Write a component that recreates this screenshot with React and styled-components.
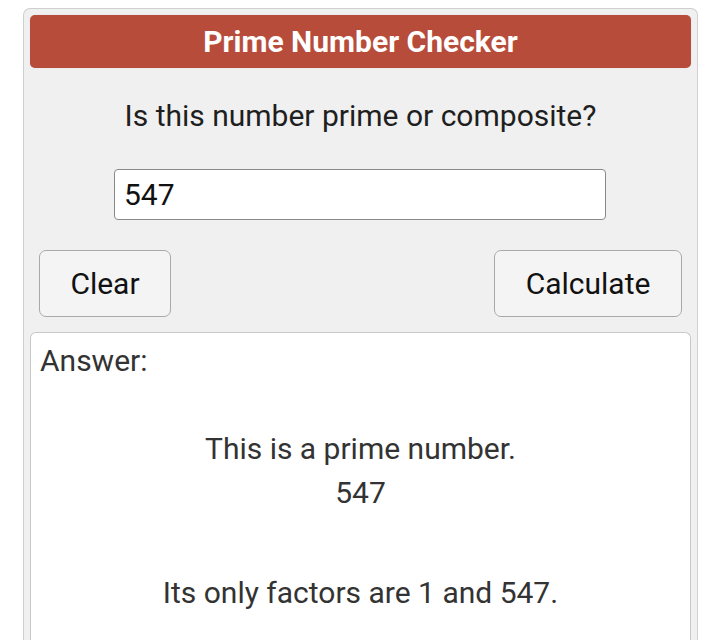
import React from "react";
import styled, { createGlobalStyle } from "styled-components";

const Global = createGlobalStyle`
  html, body { margin: 0; padding: 0; background: #ffffff; }
  body { font-family: Roboto, "Noto Sans", Arial, sans-serif; }
`;

const Page = styled.div`
  padding: 8px 22px 0 23px;
`;

const Panel = styled.div`
  width: 675px;
  box-sizing: border-box;
  background: #f0f0f0;
  border: 1px solid #cfcfcf;
  border-bottom: none;
  border-radius: 7px 7px 0 0;
  padding: 6px 6px 0 6px;
  height: 632px;
  overflow: hidden;
`;

const Header = styled.div`
  height: 53px;
  background: #b84c3a;
  border-radius: 5px;
  color: #ffffff;
  font-weight: 700;
  font-size: 30px;
  display: flex;
  align-items: center;
  justify-content: center;
  box-shadow: 0 0 1px rgba(0,0,0,0.2);
`;

const Question = styled.div`
  margin-top: 32px;
  text-align: center;
  font-size: 30px;
  color: #1f1f1f;
  line-height: 32px;
`;

const InputRow = styled.div`
  display: flex;
  justify-content: center;
  margin-top: 37px;
`;

const NumberInput = styled.input`
  width: 492px;
  height: 51px;
  box-sizing: border-box;
  border: 1px solid #8a8a8a;
  border-radius: 4px;
  background: #ffffff;
  font-family: Roboto, sans-serif;
  font-size: 30px;
  color: #111;
  padding: 0 9px;
  margin-left: -1px;
  outline: none;
`;

const ButtonRow = styled.div`
  display: flex;
  justify-content: space-between;
  margin-top: 30px;
  padding: 0 9px;
`;

const Button = styled.button`
  width: ${(p) => p.w}px;
  height: 67px;
  box-sizing: border-box;
  background: #f4f4f4;
  border: 1px solid #a9a9a9;
  border-radius: 7px;
  font-family: Roboto, sans-serif;
  font-size: 30px;
  color: #111;
  cursor: pointer;
`;

const AnswerBox = styled.div`
  margin-top: 15px;
  background: #ffffff;
  border: 1px solid #c8c8c8;
  border-bottom: none;
  border-radius: 6px 6px 0 0;
  height: 320px;
  padding: 12px 9px 0 9px;
  color: #333333;
  font-size: 30px;
`;

const AnswerLabel = styled.div`
  line-height: 32px;
`;

const Result = styled.div`
  text-align: center;
  margin-top: ${(p) => p.mt}px;
  line-height: 32px;
`;

export default function App() {
  return (
    <>
      <Global />
      <Page>
        <Panel>
          <Header>Prime Number Checker</Header>
          <Question>Is this number prime or composite?</Question>
          <InputRow>
            <NumberInput type="text" defaultValue="547" />
          </InputRow>
          <ButtonRow>
            <Button w={132}>Clear</Button>
            <Button w={188}>Calculate</Button>
          </ButtonRow>
          <AnswerBox>
            <AnswerLabel>Answer:</AnswerLabel>
            <Result mt={56}>This is a prime number.</Result>
            <Result mt={12}>547</Result>
            <Result mt={68}>Its only factors are 1 and 547.</Result>
          </AnswerBox>
        </Panel>
      </Page>
    </>
  );
}
